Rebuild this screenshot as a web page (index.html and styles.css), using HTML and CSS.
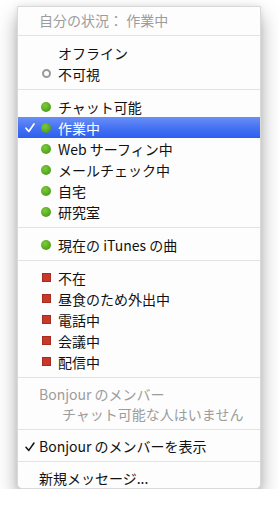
FILE: index.html
```html
<!DOCTYPE html>
<html lang="ja">
  <head>
    <meta charset="UTF-8" />
    <meta name="viewport" content="width=device-width, initial-scale=1.0"/>
    <title>iChat status menu</title>
    <link rel="stylesheet" href="styles.css">
  </head>
  <body>
    <div class="menu">
      <div class="item title disabled">自分の状況： 作業中</div>
      <div class="sep"></div>

      <div class="item"><span class="check"></span><span class="icon"></span><span class="label">オフライン</span></div>
      <div class="item"><span class="check"></span><span class="icon"><i class="ring"></i></span><span class="label">不可視</span></div>
      <div class="sep"></div>

      <div class="item"><span class="check"></span><span class="icon"><i class="dot"></i></span><span class="label">チャット可能</span></div>
      <div class="item selected">
        <span class="check">
          <svg width="10" height="10" viewBox="0 0 10 10"><path d="M1 5.2 L3.8 8.4 L9 1" fill="none" stroke="currentColor" stroke-width="1.7" stroke-linecap="round" stroke-linejoin="round"/></svg>
        </span>
        <span class="icon"><i class="dot"></i></span><span class="label">作業中</span>
      </div>
      <div class="item"><span class="check"></span><span class="icon"><i class="dot"></i></span><span class="label">Web サーフィン中</span></div>
      <div class="item"><span class="check"></span><span class="icon"><i class="dot"></i></span><span class="label">メールチェック中</span></div>
      <div class="item"><span class="check"></span><span class="icon"><i class="dot"></i></span><span class="label">自宅</span></div>
      <div class="item"><span class="check"></span><span class="icon"><i class="dot"></i></span><span class="label">研究室</span></div>
      <div class="sep"></div>

      <div class="item"><span class="check"></span><span class="icon"><i class="dot"></i></span><span class="label">現在の iTunes の曲</span></div>
      <div class="sep"></div>

      <div class="item"><span class="check"></span><span class="icon"><i class="square"></i></span><span class="label">不在</span></div>
      <div class="item"><span class="check"></span><span class="icon"><i class="square"></i></span><span class="label">昼食のため外出中</span></div>
      <div class="item"><span class="check"></span><span class="icon"><i class="square"></i></span><span class="label">電話中</span></div>
      <div class="item"><span class="check"></span><span class="icon"><i class="square"></i></span><span class="label">会議中</span></div>
      <div class="item"><span class="check"></span><span class="icon"><i class="square"></i></span><span class="label">配信中</span></div>
      <div class="sep"></div>

      <div class="item short disabled plain">Bonjour のメンバー</div>
      <div class="item short disabled plain indent">チャット可能な人はいません</div>
      <div class="sep"></div>

      <div class="item short">
        <span class="check">
          <svg width="10" height="10" viewBox="0 0 10 10"><path d="M1 5.2 L3.8 8.4 L9 1" fill="none" stroke="currentColor" stroke-width="1.5" stroke-linecap="round" stroke-linejoin="round"/></svg>
        </span>
        <span class="label">Bonjour のメンバーを表示</span>
      </div>
      <div class="sep"></div>

      <div class="item short plain">新規メッセージ...</div>
    </div>
  </body>
</html>
```

FILE: styles.css
```css
body {
  margin: 0;
  padding: 0;
  background-color: #ffffff;
  font-family: "Noto Sans CJK JP", "Noto Sans", sans-serif;
  font-size: 14px;
  color: #111;
}

.menu {
  box-sizing: border-box;
  width: 244px;
  margin: 6px 0 0 17px;
  padding-top: 3px;
  background-color: #fdfdfd;
  border: 1px solid #d9d9d9;
  border-radius: 0 0 5px 5px;
  box-shadow: 0 10px 20px rgba(0, 0, 0, 0.34), 0 0 6px rgba(0, 0, 0, 0.08);
}

.item {
  display: flex;
  align-items: center;
  height: 21px;
  padding-left: 7px;
  white-space: nowrap;
}

.item.short { height: 20px; }
.item.title { height: 20px; padding-left: 21px; }
.item.plain { padding-left: 21px; }
.item.indent { padding-left: 44px; }

.disabled { color: #9c9c9c; }

.item.selected {
  color: #ffffff;
  background: linear-gradient(to bottom, #6a8ff6 0%, #4673f3 50%, #2d5ef0 100%);
}

.check {
  display: flex;
  align-items: center;
  width: 14px;
  height: 100%;
}

.check svg { margin-top: 1px; }

.icon {
  display: flex;
  align-items: center;
  width: 19px;
  height: 100%;
}

.dot, .ring, .square {
  display: block;
  box-sizing: border-box;
  margin-left: 3px;
}

.dot {
  width: 10px;
  height: 10px;
  margin-left: 2px;
  border-radius: 50%;
  background: radial-gradient(circle at 40% 35%, #7dcc3c 0%, #56a820 60%, #3f8a14 100%);
}

.ring {
  width: 9px;
  height: 9px;
  border-radius: 50%;
  border: 2px solid #9a9a9a;
}

.square {
  width: 9px;
  height: 9px;
  background-color: #c8392b;
  border: 1px solid #a62b20;
}

.sep {
  height: 12px;
  position: relative;
}

.sep::after {
  content: "";
  position: absolute;
  left: 0;
  right: 0;
  top: 5px;
  height: 1px;
  background-color: #e3e3e3;
}
```
